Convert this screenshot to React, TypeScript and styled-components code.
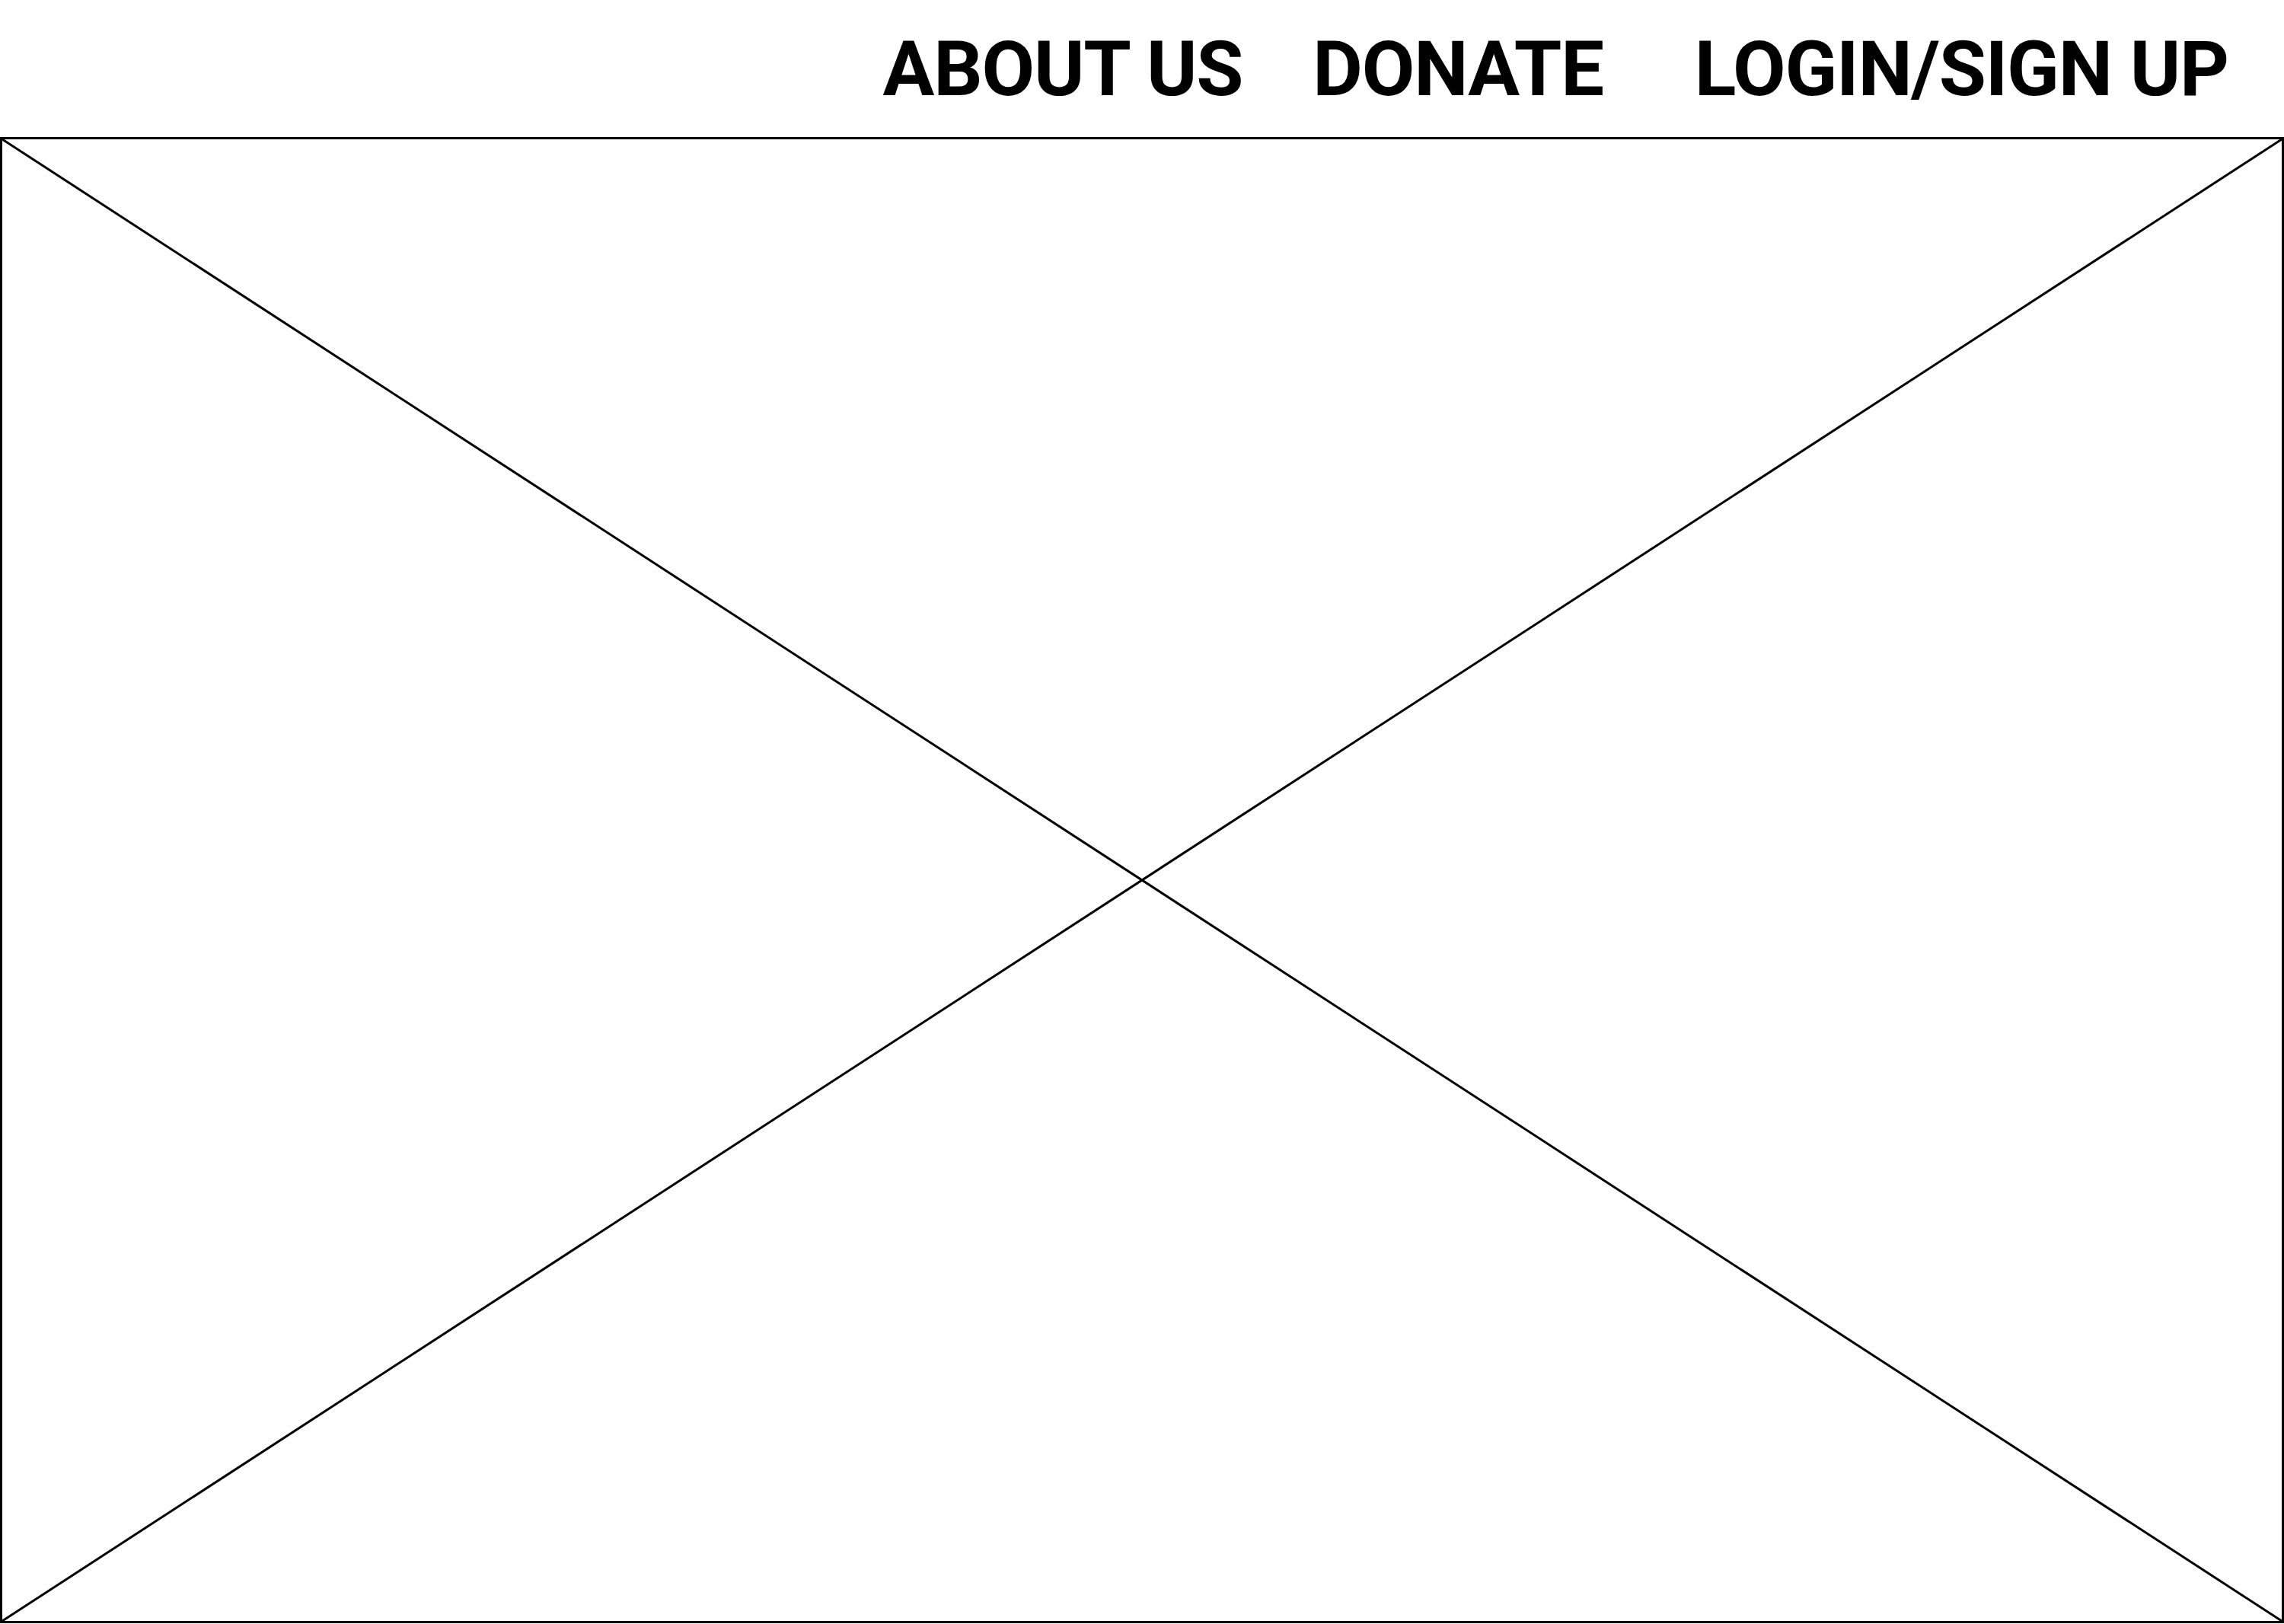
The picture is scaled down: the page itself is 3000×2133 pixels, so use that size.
import React from "react";
import styled, { createGlobalStyle } from "styled-components";

const GlobalStyle = createGlobalStyle`
  html, body {
    margin: 0;
    padding: 0;
    background: #fff;
  }
  body {
    font-family: Roboto, "Liberation Sans", sans-serif;
    color: #000;
  }
`;

const Page = styled.div`
  width: 3000px;
  height: 2133px;
  display: flex;
  flex-direction: column;
  overflow: hidden;
`;

// top navigation bar
const Header = styled.header`
  height: 180px;
  display: flex;
  justify-content: flex-end;
  align-items: flex-start;
  padding-right: 73px;
  box-sizing: border-box;
`;

const NavLink = styled.a<{ $gap: number }>`
  font-size: 101px;
  font-weight: 700;
  line-height: 1;
  letter-spacing: -1.2px;
  margin-left: ${(p) => p.$gap}px;
  margin-top: 40px;
  color: #000;
  text-decoration: none;
  white-space: nowrap;
  cursor: pointer;
`;

// image placeholder box with the X
const Placeholder = styled.div`
  flex: 1;
  position: relative;
  border: 3px solid #000;
  box-sizing: border-box;
  margin-bottom: 1px;
`;

const Cross = styled.svg`
  position: absolute;
  inset: 0;
  width: 100%;
  height: 100%;
  display: block;
`;

export default function App() {
  return (
    <Page>
      <GlobalStyle />
      <Header>
        <NavLink $gap={0}>ABOUT US</NavLink>
        <NavLink $gap={92}>DONATE</NavLink>
        <NavLink $gap={120}>LOGIN/SIGN UP</NavLink>
      </Header>
      <Placeholder>
        <Cross viewBox="0 0 100 100" preserveAspectRatio="none">
          <line x1="0" y1="0" x2="100" y2="100" stroke="#000" strokeWidth="3" vectorEffect="non-scaling-stroke" />
          <line x1="100" y1="0" x2="0" y2="100" stroke="#000" strokeWidth="3" vectorEffect="non-scaling-stroke" />
        </Cross>
      </Placeholder>
    </Page>
  );
}
